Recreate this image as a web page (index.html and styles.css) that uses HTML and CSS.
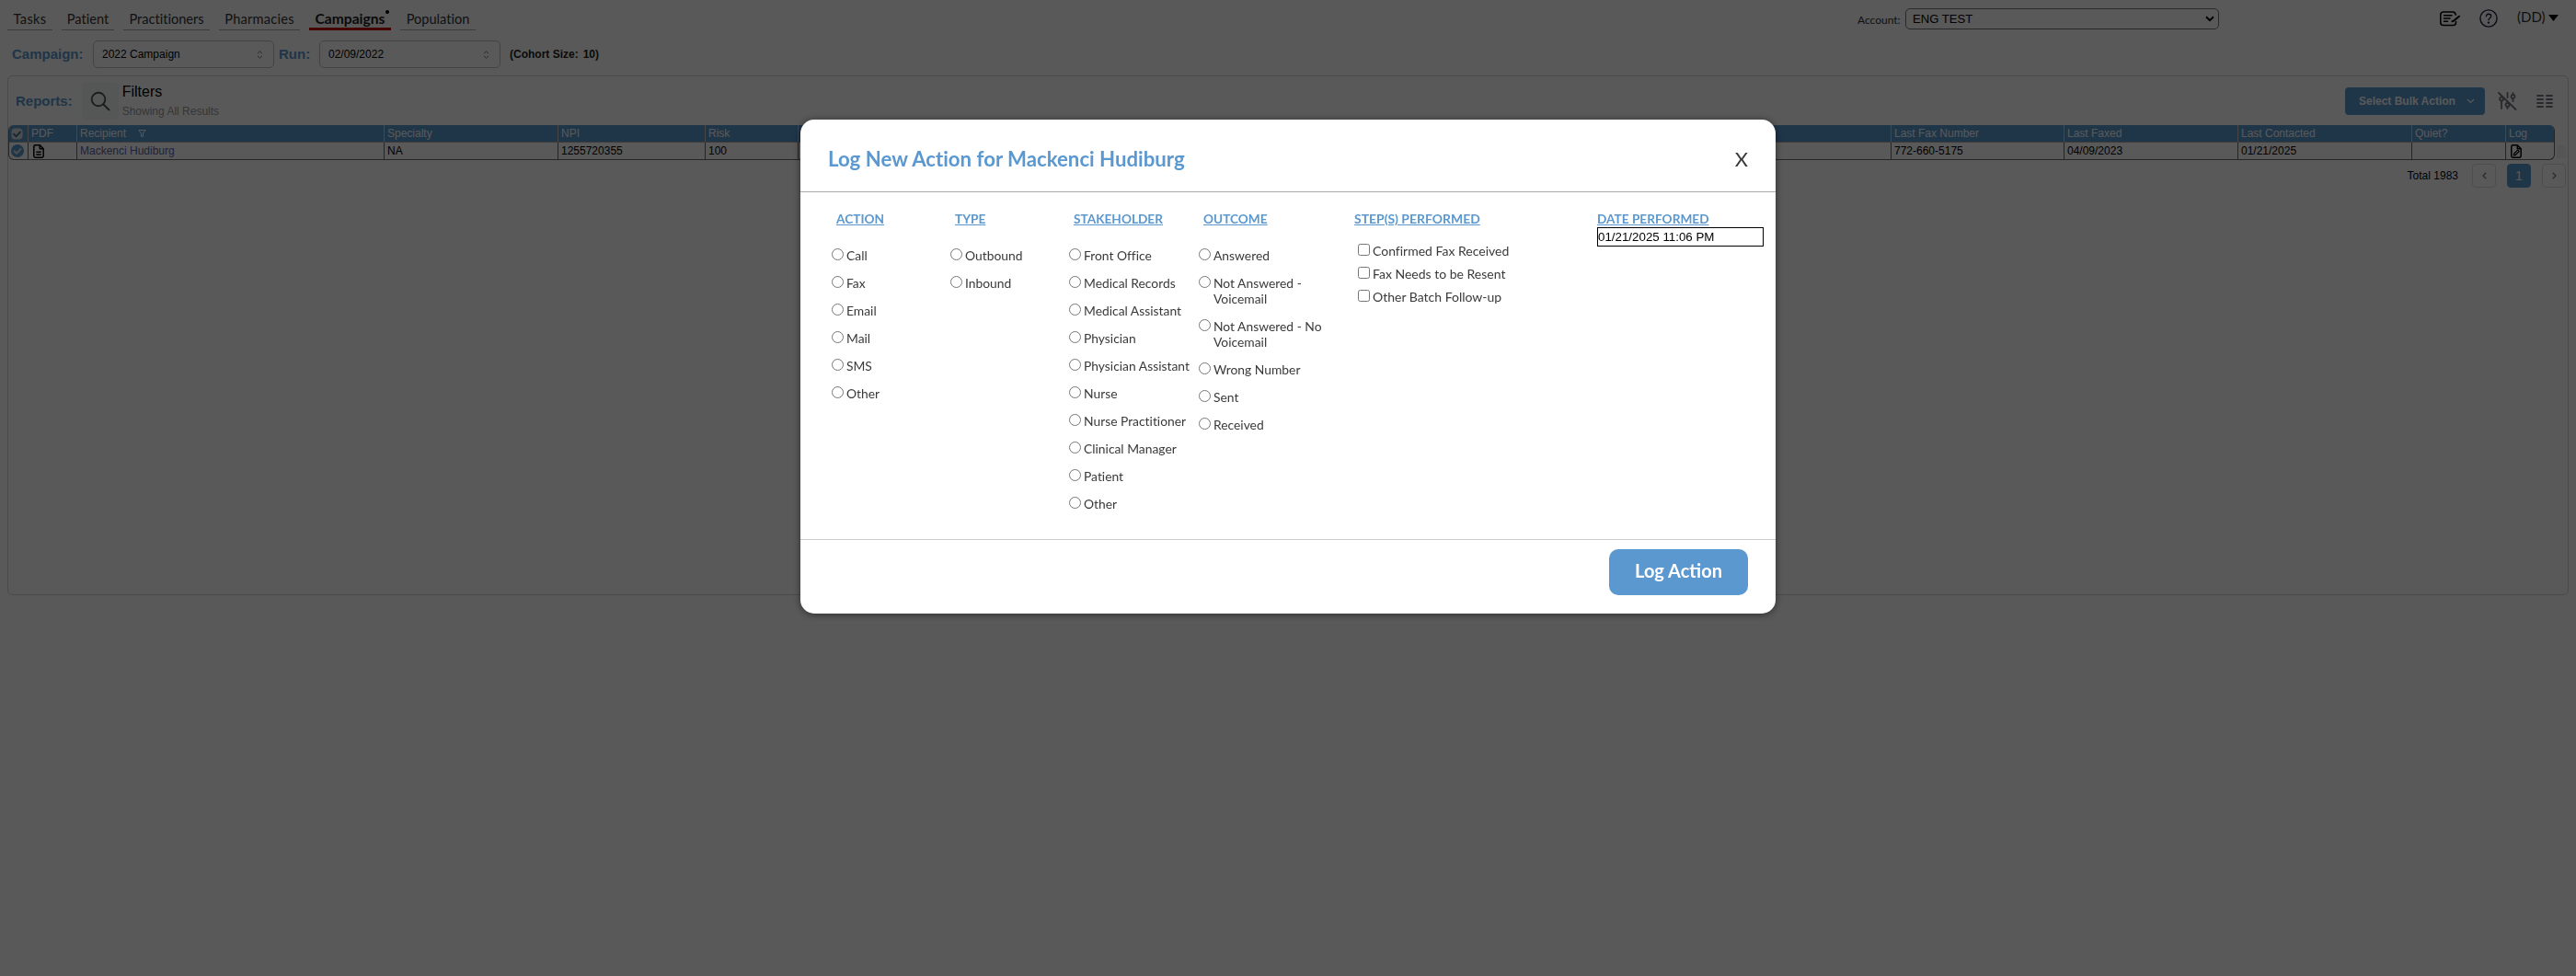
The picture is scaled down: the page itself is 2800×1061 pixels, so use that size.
FILE: index.html
```html
<!DOCTYPE html>
<html lang="en">
<head>
<meta charset="utf-8">
<title>Campaigns</title>
<link rel="stylesheet" href="styles.css">
</head>
<body>
<header class="topbar">
  <nav class="tabs">
    <a class="tab tab-tasks">Tasks</a>
    <a class="tab tab-patient">Patient</a>
    <a class="tab tab-practitioners">Practitioners</a>
    <a class="tab tab-pharmacies">Pharmacies</a>
    <a class="tab tab-campaigns active">Campaigns<span class="dot"></span></a>
    <a class="tab tab-population">Population</a>
  </nav>
  <div class="account">
    <span class="account-label">Account:</span>
    <div class="account-select"><span>ENG TEST</span>
      <svg width="10" height="7" viewBox="0 0 10 7"><path d="M1 1.200l4 4 4-4" fill="none" stroke="#000" stroke-width="2"/></svg>
    </div>
  </div>
  <div class="tools">
    <svg class="tool-notes" width="22" height="17" viewBox="0 0 22 17" fill="none" stroke="#000" stroke-width="1.500" stroke-linecap="round"><path d="M17.300 4.200C17 1.800 16 .9 14 .9H4C1.800.9.8 2 .8 4v8.500c0 2 1 3 3.200 3h10.500c2 0 3-1 3-3v-1"/><path d="M4.500 4.700h8.500M4.500 8h6.500M4.500 11.300h4"/><path d="M21 5.700l-6 5-1.500.6" stroke-width="2"/></svg>
    <svg class="tool-help" width="20" height="20" viewBox="0 0 20 20" fill="none" stroke="#1c2340" stroke-width="1.400" stroke-linecap="round"><circle cx="10" cy="10" r="9.100"/><path d="M7.400 7.800c0-1.600 1.100-2.600 2.600-2.600s2.700 1 2.700 2.400c0 2-2.700 2.200-2.700 4.200"/><circle cx="10" cy="14.600" r=".5" fill="#1c2340"/></svg>
    <span class="user">(DD)</span>
    <svg class="caret" width="11" height="7" viewBox="0 0 11 7"><path d="M0 0h11L5.500 7z"/></svg>
  </div>
</header>

<section class="runbar">
  <span class="blue-label campaign-label">Campaign:</span>
  <div class="picker"><span>2022 Campaign</span><svg width="7" height="9" viewBox="0 0 7 9"><path d="M1 3.200L3.500.8 6 3.200M1 5.800l2.500 2.400L6 5.800" fill="none" stroke="#777" stroke-width="1"/></svg></div>
  <span class="blue-label run-label">Run:</span>
  <div class="picker"><span>02/09/2022</span><svg width="7" height="9" viewBox="0 0 7 9"><path d="M1 3.200L3.500.8 6 3.200M1 5.800l2.500 2.400L6 5.800" fill="none" stroke="#777" stroke-width="1"/></svg></div>
  <strong class="cohort"><span>(Cohort Size:</span><span>10)</span></strong>
</section>

<main class="panel">
  <div class="panel-head">
    <span class="blue-label">Reports:</span>
    <div class="search"><svg width="22" height="22" viewBox="0 0 22 22" fill="none" stroke="#555" stroke-width="1.900" stroke-linecap="round"><circle cx="9" cy="9" r="7.300"/><path d="M14.500 14.500l6 6"/></svg></div>
    <div class="filters"><span class="filters-title">Filters</span><span class="filters-note">Showing All Results</span></div>
    <div class="bulk"><span>Select Bulk Action</span><svg width="9" height="6" viewBox="0 0 9 6"><path d="M1 1l3.500 3.500L8 1" fill="none" stroke="#fff" stroke-width="1.200"/></svg></div>
    <svg class="filter-off" width="21" height="20" viewBox="0 0 21 20" fill="none" stroke="#777780" stroke-width="1.800" stroke-linecap="round"><path d="M1 1l18.500 18M4 10v8M10.500 1v5M10.500 16.500V18M16.500 8v2"/><circle cx="4" cy="7.500" r="2"/><circle cx="10.500" cy="14" r="2"/><circle cx="16.500" cy="5" r="2"/><path d="M16.500 1.200V2.500"/></svg>
    <svg class="columns-icon" width="18" height="14" viewBox="0 0 18 14" stroke="#777780" stroke-width="1.800" stroke-linecap="round"><path d="M1 1h6M11 1h6M1 5h6M11 5h6M1 9h6M11 9h6M1 13h6M11 13h6"/></svg>
  </div>

  <div class="grid-wrap">
    <div class="grid">
      <div class="row head">
        <div class="check"><svg width="13" height="13" viewBox="0 0 13 13"><rect x=".5" y=".5" width="12" height="12" rx="4" fill="#ddd"/><path d="M2.500 6.300l3 3 5-5.300" fill="none" stroke="#46759f" stroke-width="2"/></svg></div>
        <div>PDF</div><div>Recipient <svg class="funnel" width="9" height="8" viewBox="0 0 9 8"><path d="M.8.6h7.400L5.500 4v3.400h-2V4z" fill="none" stroke="#fff" stroke-width="1"/></svg></div><div>Specialty</div><div>NPI</div><div>Risk</div><div></div><div>Last Fax Number</div><div>Last Faxed</div><div>Last Contacted</div><div>Quiet?</div><div>Log</div>
      </div>
      <div class="row">
        <div class="check"><svg width="14" height="14" viewBox="0 0 14 14"><circle cx="7" cy="7" r="7" fill="#5b98cf"/><path d="M3 6.800l3 3 5-5.300" fill="none" stroke="#ddd" stroke-width="2"/></svg></div>
        <div class="pdf"><svg width="12" height="15" viewBox="0 0 12 15" fill="none" stroke="#000" stroke-width="1.500" stroke-linejoin="round"><path d="M7.300.8H2.500C1.400.8.8 1.400.8 2.500v10c0 1.100.6 1.700 1.700 1.700h7c1.100 0 1.700-.6 1.700-1.700V4.700zM7.300.8v3.900h3.900M3.300 8.300h5.400M3.300 11h5.400"/></svg></div>
        <div class="link">Mackenci Hudiburg</div><div>NA</div><div>1255720355</div><div>100</div><div></div><div>772-660-5175</div><div>04/09/2023</div><div>01/21/2025</div><div></div>
        <div class="log"><svg width="12" height="15" viewBox="0 0 12 15" fill="none" stroke="#000" stroke-width="1.500" stroke-linejoin="round"><path d="M7.300.8H2.500C1.400.8.8 1.400.8 2.500v10c0 1.100.6 1.700 1.700 1.700h7c1.100 0 1.700-.6 1.700-1.700V4.700zM7.300.8v3.900h3.900"/><path d="M3.300 11.800l.5-2 3.900-3.700 1.500 1.500-3.900 3.700z" stroke-width="1.200"/></svg></div>
      </div>
    </div>
    <div class="scroll-corner"></div>
  </div>

  <div class="pager">
    <span class="total">Total 1983</span>
    <span class="page"><svg width="5" height="8" viewBox="0 0 5 8"><path d="M4.300.8L1 4l3.300 3.200" fill="none" stroke="#777" stroke-width="1.200"/></svg></span>
    <span class="page current">1</span>
    <span class="page"><svg width="5" height="8" viewBox="0 0 5 8"><path d="M.7.800L4 4 .7 7.200" fill="none" stroke="#777" stroke-width="1.200"/></svg></span>
  </div>
</main>

<div class="overlay">
  <div class="modal">
    <div class="modal-head"><h2>Log New Action for Mackenci Hudiburg</h2><span class="close">X</span></div>
    <div class="modal-body">
      <div class="group">
        <h3>ACTION</h3>
        <label><input type="radio"><span>Call</span></label>
        <label><input type="radio"><span>Fax</span></label>
        <label><input type="radio"><span>Email</span></label>
        <label><input type="radio"><span>Mail</span></label>
        <label><input type="radio"><span>SMS</span></label>
        <label><input type="radio"><span>Other</span></label>
      </div>
      <div class="group">
        <h3>TYPE</h3>
        <label><input type="radio"><span>Outbound</span></label>
        <label><input type="radio"><span>Inbound</span></label>
      </div>
      <div class="group">
        <h3>STAKEHOLDER</h3>
        <label><input type="radio"><span>Front Office</span></label>
        <label><input type="radio"><span>Medical Records</span></label>
        <label><input type="radio"><span>Medical Assistant</span></label>
        <label><input type="radio"><span>Physician</span></label>
        <label><input type="radio"><span>Physician Assistant</span></label>
        <label><input type="radio"><span>Nurse</span></label>
        <label><input type="radio"><span>Nurse Practitioner</span></label>
        <label><input type="radio"><span>Clinical Manager</span></label>
        <label><input type="radio"><span>Patient</span></label>
        <label><input type="radio"><span>Other</span></label>
      </div>
      <div class="group">
        <h3>OUTCOME</h3>
        <label><input type="radio"><span>Answered</span></label>
        <label><input type="radio"><span>Not Answered -<br>Voicemail</span></label>
        <label><input type="radio"><span>Not Answered - No<br>Voicemail</span></label>
        <label><input type="radio"><span>Wrong Number</span></label>
        <label><input type="radio"><span>Sent</span></label>
        <label><input type="radio"><span>Received</span></label>
      </div>
      <div class="group steps">
        <h3>STEP(S) PERFORMED</h3>
        <label><input type="checkbox"><span>Confirmed Fax Received</span></label>
        <label><input type="checkbox"><span>Fax Needs to be Resent</span></label>
        <label><input type="checkbox"><span>Other Batch Follow-up</span></label>
      </div>
      <div class="group date">
        <h3>DATE PERFORMED</h3>
        <div class="date-field">01/21/2025 11:06 PM</div>
      </div>
    </div>
    <div class="modal-foot"><button class="log-action">Log Action</button></div>
  </div>
</div>
</body>
</html>
```
FILE: styles.css
```css
* { box-sizing: border-box; }
html, body { height: 100%; }
body {
  margin: 0;
  overflow: hidden;
  background: #fff;
  color: #000;
  font: 12px/16px "Liberation Sans", Arial, sans-serif;
  font-variant-ligatures: none;
}
svg { display: block; flex: none; }

/* top bar */
.topbar { display: flex; height: 33px; padding-left: 8px; font-family: Lato, sans-serif; }
.tabs { display: flex; gap: 10px; }
.tab {
  height: 33px;
  padding-top: 12px;
  border-bottom: 1px solid #aaa;
  color: #333;
  font-size: 14.6px;
  line-height: 18px;
  text-align: center;
}
.tab-tasks { width: 49px; letter-spacing: .35px; }
.tab-patient { width: 57px; }
.tab-practitioners { width: 94px; }
.tab-pharmacies { width: 88px; letter-spacing: .25px; }
.tab-campaigns { width: 89px; }
.tab-population { width: 82px; }
.tab.active {
  position: relative;
  padding-top: 11px;
  border-bottom: 3px solid #c40000;
  color: #222;
  font-size: 15.6px;
  font-weight: 700;
}
.dot { position: absolute; top: 11px; right: 2px; width: 4px; height: 4px; border-radius: 50%; background: #000; }

.account { display: flex; margin-left: auto; padding-top: 9px; }
.account-label { width: 52px; color: #333; font-size: 12px; line-height: 25px; }
.account-select {
  display: flex;
  align-items: center;
  justify-content: space-between;
  width: 341px;
  height: 23px;
  padding: 0 4px 0 7px;
  border: 1px solid #767676;
  border-radius: 5px;
  font: 13.1px/21px "Liberation Sans", Arial, sans-serif;
}
.tools { display: flex; width: 388px; padding-left: 240px; }
.tool-notes { margin-top: 12px; }
.tool-help { margin: 10px 0 0 21px; }
.user { margin: 9px 0 0 21px; width: 34px; color: #333; font-size: 15px; line-height: 18px; }
.caret { margin-top: 16px; }

/* campaign and run selectors */
.runbar { display: flex; align-items: center; height: 30px; margin-top: 11px; padding-left: 13px; }
.blue-label { color: #5b98cf; font-size: 15px; font-weight: 700; }
.campaign-label { width: 88px; }
.run-label { width: 44px; margin-left: 5px; }
.picker {
  display: flex;
  align-items: center;
  justify-content: space-between;
  width: 197px;
  height: 30px;
  padding: 0 11px 0 9px;
  border: 1px solid #c0c0c0;
  border-radius: 5px;
}
.cohort { display: flex; gap: 5px; margin-left: 10px; color: #222; }

/* reports panel */
.panel { width: 2784px; height: 565px; margin: 8px 0 0 8px; border: 1px solid #d4d4d4; border-radius: 5px; }
.panel-head { display: flex; align-items: center; height: 53px; padding: 0 16px 0 8px; }
.search { display: flex; align-items: center; justify-content: center; width: 40px; height: 41px; margin: 0 4px 0 10px; border-radius: 5px; background: #f3f8f7; }
.filters { display: flex; flex-direction: column; }
.filters-title { font-size: 16px; line-height: 22px; }
.filters-note { color: #9a9a9a; line-height: 20px; }
.bulk {
  display: flex;
  align-items: center;
  justify-content: space-between;
  width: 152px;
  height: 30px;
  margin: 0 14px 0 auto;
  padding: 0 11px 0 15px;
  border-radius: 4px;
  background: #5b98cf;
  color: #fff;
  font-weight: 700;
}
.columns-icon { margin-left: 21px; }
.grid-wrap { display: flex; align-items: flex-end; gap: 2px; }
.grid { width: 2768px; border: 1px solid #6c6c6c; border-top: 0; border-radius: 6px; overflow: hidden; }
.row {
  display: grid;
  grid-template-columns: 21px 53px 334px 189px 160px 101px 1188px 188px 189px 189px 102px 52px;
  height: 18px;
  line-height: 18px;
}
.row > div { display: flex; align-items: center; padding-left: 3px; border-right: 1px solid #6c6c6c; white-space: nowrap; }
.row > div:last-child { border-right: 0; }
.row.head { height: 19px; border-bottom: 1px solid #aaa; background: #5b98cf; color: #fff; }
.row.head > div { border-right-color: #ccc; }
.row > .check { padding-left: 2px; }
.row > .pdf, .row > .log { padding-left: 5px; }
.link { color: #5664ac; }
.funnel { margin-left: 13px; }
.scroll-corner { width: 10px; height: 14px; margin-bottom: 2px; background: #f4f4f4; }
.pager { display: flex; align-items: center; gap: 12px; height: 26px; margin-top: 4px; padding-right: 2px; justify-content: flex-end; }
.total { margin-right: 3px; }
.page { display: flex; align-items: center; justify-content: center; width: 26px; height: 26px; border: 1px solid #dcdcdc; border-radius: 4px; }
.page.current { border-color: #5b98cf; background: #5b98cf; color: #fff; font-size: 14px; }

/* dialog */
.overlay {
  position: fixed;
  inset: 0;
  display: flex;
  align-items: flex-start;
  justify-content: center;
  padding-top: 130px;
  background: rgba(0, 0, 0, .65);
}
.modal {
  width: 1060px;
  height: 537px;
  border-radius: 15px;
  background: #fff;
  box-shadow: 0 1px 8px rgba(0, 0, 0, .5);
  color: #3a3a3a;
  font-family: Lato, sans-serif;
}
.modal-head { display: flex; align-items: flex-start; justify-content: space-between; height: 79px; padding: 28px 30px 0 30px; border-bottom: 1px solid #aaa; }
.modal-head h2 { margin: 0; color: #5b98cf; font-size: 22.2px; font-weight: 700; line-height: 30px; }
.close { font-size: 22px; line-height: 30px; }
.modal-body { display: grid; grid-template-columns: 129px 129px 141px 169px 264px 181px; height: 377px; padding: 20px 0 0 34px; }
.group h3 { margin: 0 0 22px; padding-left: 5px; color: #5b98cf; font-size: 13.65px; font-weight: 700; line-height: 18px; text-decoration: underline; white-space: nowrap; }
.group label { display: flex; align-items: flex-start; gap: 3px; margin-bottom: 13px; font-size: 13.85px; line-height: 17px; white-space: nowrap; }
.group input { flex: none; width: 13px; height: 13px; margin: 1px 0 0; }
.steps h3 { margin-bottom: 17px; padding-left: 0; font-size: 13.95px; }
.steps label { margin: 0 0 8px 4px; font-size: 14px; }
.date h3 { margin-bottom: 0; padding-left: 0; }
.date-field { height: 21px; border: 1px solid #000; color: #000; font: 13.33px/19px "Liberation Sans", Arial, sans-serif; }
.modal-foot { display: flex; justify-content: flex-end; padding: 10px 30px 0 0; border-top: 1px solid #ccc; }
.log-action { width: 151px; height: 50px; padding: 0 0 5px; border: 0; border-radius: 10px; background: #5b98cf; color: #fff; font: 700 20px/24px Lato, sans-serif; }
```
